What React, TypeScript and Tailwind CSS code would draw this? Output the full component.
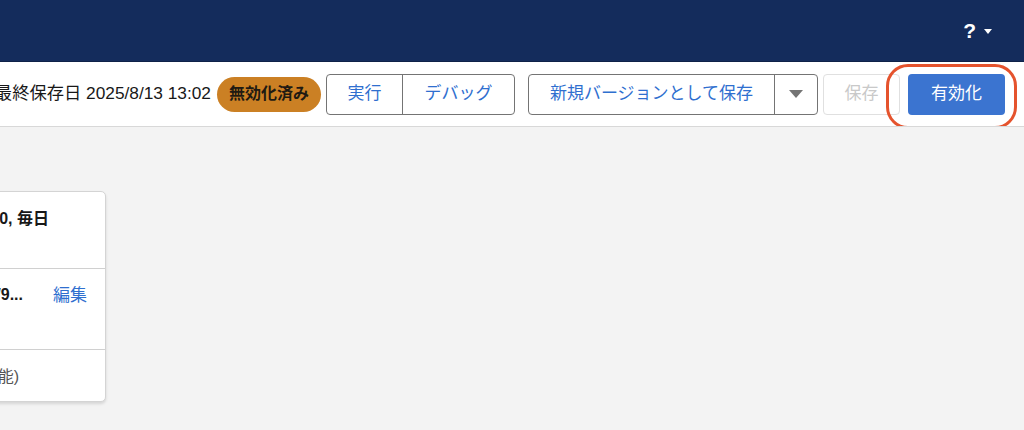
import React from "react";

const font = { fontFamily: '"Liberation Sans", "Noto Sans CJK JP", sans-serif' };

export default function App() {
  return (
    <div className="w-[1024px] h-[430px] overflow-hidden bg-[#f3f3f3] text-[#181818]" style={font}>
      {/* Header */}
      <header className="h-[62px] bg-[#142c5c] border-b border-[#0e2148] flex items-center justify-end pr-[32px]">
        <button className="flex items-center gap-[8px] text-white">
          <span className="text-[21px] font-bold leading-none">?</span>
          <svg width="8" height="5" viewBox="0 0 8 5" className="mt-[1px]">
            <path d="M0 0h8L4 5z" fill="white" />
          </svg>
        </button>
      </header>

      {/* Toolbar */}
      <div className="relative h-[65px] bg-white border-b border-[#d8d8d8] flex items-center justify-end pr-[19px] whitespace-nowrap overflow-hidden">
        <span className="text-[17.3px] mr-[6px] shrink-0">最終保存日 2025/8/13 13:02</span>
        <span className="shrink-0 h-[35px] px-[12px] rounded-full bg-[#cb8024] text-[16px] font-bold text-[#1f1a12] flex items-center mr-[5px]">
          無効化済み
        </span>

        <div className="shrink-0 flex h-[41px] border border-[#747474] rounded-[4px] text-[#2f6fcf] text-[17px] mr-[13px]">
          <button className="w-[76px] border-r border-[#747474]">実行</button>
          <button className="w-[111px]">デバッグ</button>
        </div>

        <div className="shrink-0 flex h-[41px] border border-[#747474] rounded-[4px] text-[#2f6fcf] text-[17px] mr-[5px]">
          <button className="w-[246px] border-r border-[#747474]">新規バージョンとして保存</button>
          <button className="w-[42px] flex items-center justify-center">
            <svg width="14" height="8" viewBox="0 0 14 8">
              <path d="M0 0h14L7 8z" fill="#747474" />
            </svg>
          </button>
        </div>

        <button className="shrink-0 h-[41px] w-[77px] border border-[#e0e0e0] rounded-[4px] text-[#c9c9c9] text-[17px] mr-[8px]">
          保存
        </button>

        <button className="shrink-0 h-[41px] w-[97px] rounded-[4px] bg-[#3b74d0] text-white text-[17px]">
          有効化
        </button>

        {/* highlight ring */}
        <div className="absolute left-[886px] top-[2px] w-[131px] h-[65px] border-[3px] border-[#e5532d] rounded-[22px] pointer-events-none" />
      </div>

      {/* Content */}
      <main className="pt-[64px]">
        <div className="ml-[-194px] w-[300px] h-[211px] bg-white border border-[#d4d4d4] rounded-[5px] shadow-[0_2px_3px_rgba(0,0,0,0.12)] flex flex-col">
          <div className="h-[77px] border-b border-[#d0d0d0] pt-[15px] flex justify-end pr-[56px]">
            <span className="text-[16px] font-bold">18:00, 毎日</span>
          </div>
          <div className="h-[81px] border-b border-[#d0d0d0] pt-[14px] pr-[18px] flex justify-end gap-[30px] text-[16px]">
            <span className="font-bold">2025/8/9...</span>
            <a className="text-[#2f6fcf] text-[17px]">編集</a>
          </div>
          <div className="flex-1 flex items-center justify-end pr-[86px] pt-[2px]">
            <span className="text-[16px] text-[#555]">(編集不可能)</span>
          </div>
        </div>
      </main>
    </div>
  );
}
